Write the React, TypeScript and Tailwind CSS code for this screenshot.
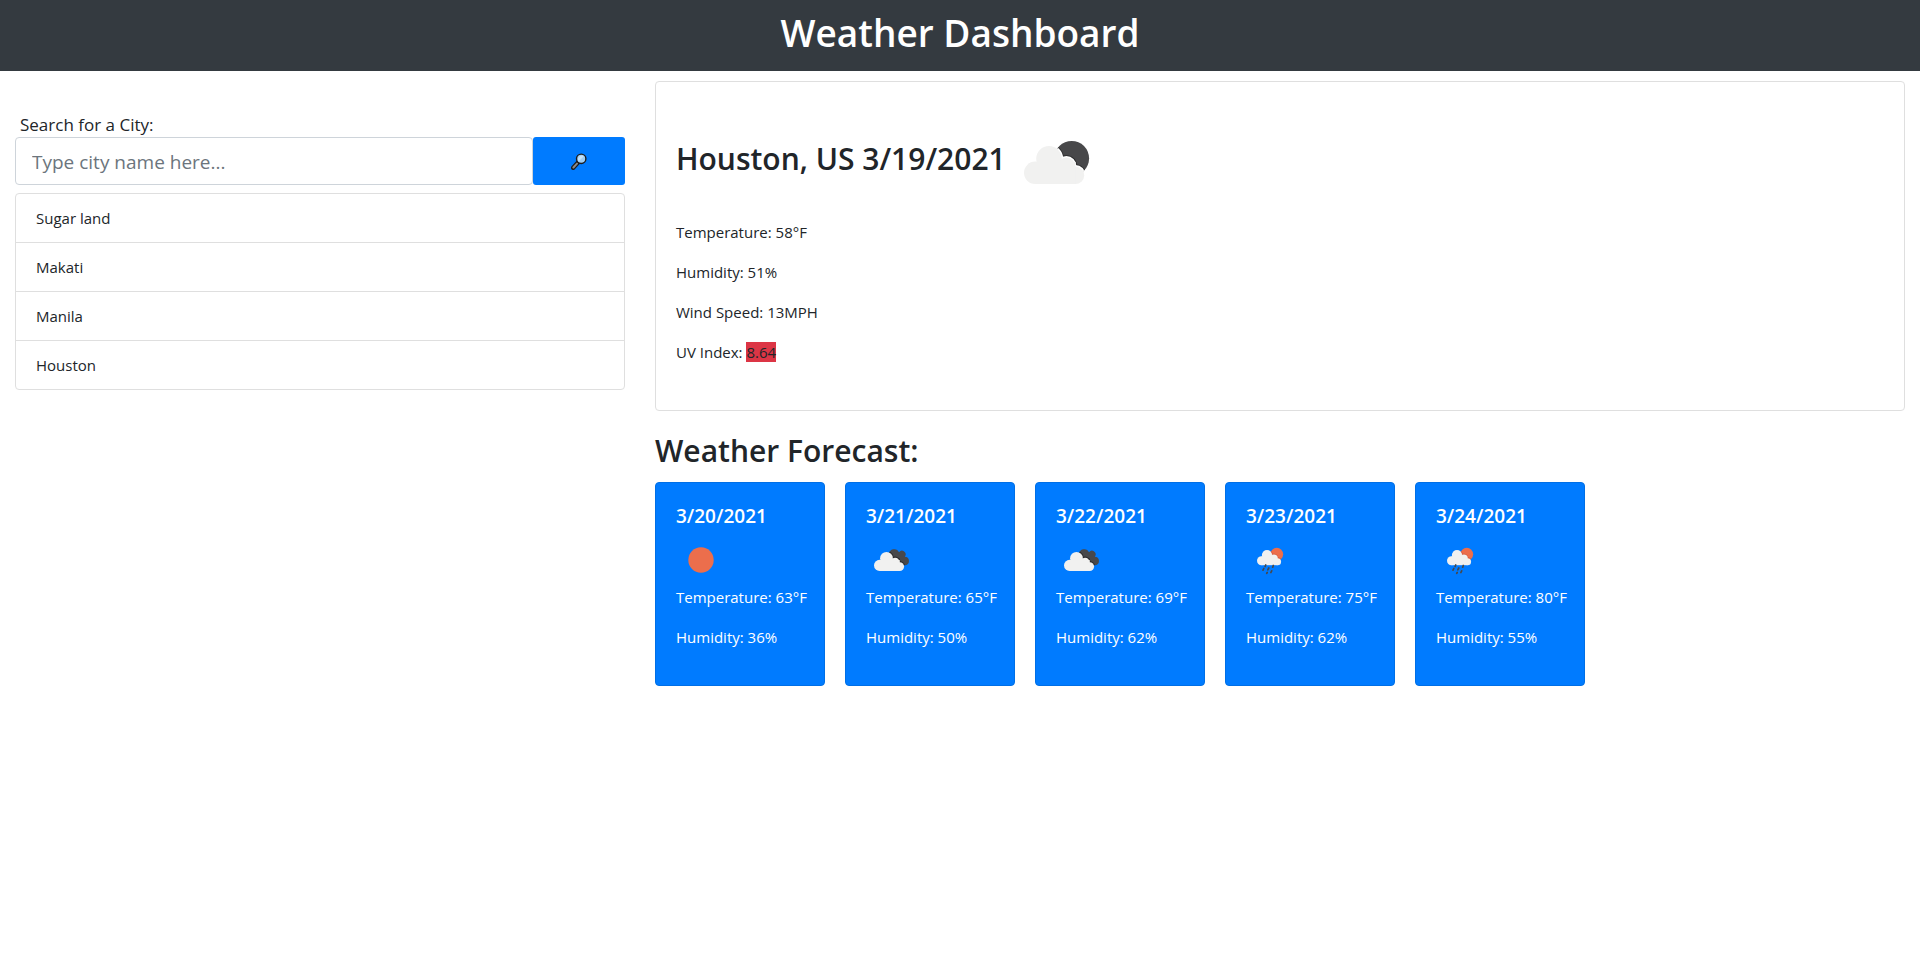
import React, { useId } from "react";

type IconKind = "sun" | "clouds" | "rain" | "night";

const history = ["Sugar land", "Makati", "Manila", "Houston"];

const forecast: { date: string; icon: IconKind; temp: number; humidity: number }[] = [
  { date: "3/20/2021", icon: "sun", temp: 63, humidity: 36 },
  { date: "3/21/2021", icon: "clouds", temp: 65, humidity: 50 },
  { date: "3/22/2021", icon: "clouds", temp: 69, humidity: 62 },
  { date: "3/23/2021", icon: "rain", temp: 75, humidity: 62 },
  { date: "3/24/2021", icon: "rain", temp: 80, humidity: 55 },
];

function CloudShape({ grow = 0, fill }: { grow?: number; fill: string }) {
  return (
    <g fill={fill}>
      <circle cx="27.2" cy="60.8" r={11.2 + grow} />
      <circle cx="41" cy="46.8" r={12.8 + grow} />
      <circle cx="58.4" cy="54" r={8.6 + grow} />
      <circle cx="67.4" cy="63.2" r={8.8 + grow} />
      <rect x="27.2" y="50" width="40.2" height="22" />
    </g>
  );
}

// The moon, sun or dark cloud that sits behind the light cloud.
function BackShape({ kind }: { kind: IconKind }) {
  if (kind === "night") return <circle cx="63.7" cy="46.3" r="17.4" />;
  if (kind === "rain") return <circle cx="61.5" cy="38.5" r="12.8" />;
  return (
    <path d="M46 38.5 A10.5 10.5 0 0 1 66 34.4 A7.4 7.4 0 0 1 77.6 43.6 A8.6 8.6 0 0 1 78.6 60.7 L60 60.7 L46 44 Z" />
  );
}

function WeatherIcon({ kind, className }: { kind: IconKind; className: string }) {
  const clip = useId();
  if (kind === "sun") {
    return (
      <svg viewBox="0 0 100 100" className={className} aria-hidden="true">
        <circle cx="50" cy="50" r="25.4" fill="#ec6e4c" />
      </svg>
    );
  }
  const rain = kind === "rain";
  const scale = rain ? "translate(9.2 2.8) scale(0.8)" : undefined;
  return (
    <svg viewBox="0 0 100 100" className={className} aria-hidden="true">
      <clipPath id={clip}>
        <BackShape kind={kind} />
      </clipPath>
      <g fill={rain ? "#ec6e4c" : "#48484a"}>
        <BackShape kind={kind} />
      </g>
      <g clipPath={`url(#${clip})`}>
        <g transform={scale}>
          <CloudShape grow={2.2} fill={rain ? "#d5583a" : "#2b2b2c"} />
          {kind === "night" && <CloudShape grow={1.4} fill="#ffffff" />}
        </g>
      </g>
      <g transform={scale}>
        <CloudShape fill="#f1f1f0" />
      </g>
      {rain && (
        <g stroke="#48484a" strokeWidth="3.4" strokeLinecap="round">
          <path d="M39.5 60 L38.2 63" />
          <path d="M54.6 61 L53.4 64.4" />
          <path d="M35.6 67 L34 70.4" />
          <path d="M45.6 66 L43.6 69.6" />
          <path d="M51.4 71.6 L49.8 75" />
          <path d="M42.5 75 L41.5 76.6" />
        </g>
      )}
    </svg>
  );
}

function Magnifier() {
  return (
    <svg viewBox="0 0 16 17" className="h-[17px] w-4" aria-hidden="true">
      <path d="M2.2 14.8 L7 9.6" stroke="#1c1c1c" strokeWidth="4.4" strokeLinecap="round" />
      <path d="M2.4 14.5 L6 10.6" stroke="#8a8a8a" strokeWidth="2" strokeLinecap="round" />
      <circle cx="10.2" cy="5.8" r="4.7" fill="#9fcdf3" stroke="#1c1c1c" strokeWidth="1.4" />
      <path d="M7.6 8.4 L12.8 3.2 A3.8 3.8 0 0 0 7.6 8.4 Z" fill="#c6e3fa" />
    </svg>
  );
}

export default function App() {
  return (
    <div className="min-h-screen bg-white font-['Segoe_UI','Open_Sans','Noto_Sans',sans-serif] text-[15px] leading-6 text-[#212529]">
      <header className="bg-[#343a40] pt-[9px] pb-[14px] text-center text-white">
        <h1 className="text-[37px] leading-[48px] font-semibold">Weather Dashboard</h1>
      </header>

      <div className="flex">
        <aside className="w-1/3 px-[15px] pt-[42px]">
          <form onSubmit={(e) => e.preventDefault()}>
            <label htmlFor="city" className="block px-[5px] text-[17px] leading-6">
              Search for a City:
            </label>
            <div className="flex">
              <input
                id="city"
                type="text"
                placeholder="Type city name here..."
                className="h-12 min-w-0 flex-1 rounded border border-[#ced4da] px-4 pt-0.5 text-[19px] placeholder:text-[#6c757d]"
              />
              <button
                type="submit"
                aria-label="Search"
                className="flex h-12 w-[92px] items-center justify-center rounded-[3px] bg-[#007bff]"
              >
                <Magnifier />
              </button>
            </div>
          </form>
          <ul className="mt-2 divide-y divide-[#dfdfdf] rounded border border-[#dfdfdf]">
            {history.map((city) => (
              <li key={city} className="px-5 py-3">
                {city}
              </li>
            ))}
          </ul>
        </aside>

        <main className="w-2/3 px-[15px] pt-[10px]">
          <section className="rounded border border-[#dfdfdf] px-5 pt-[30px] pb-[30px]">
            <div className="mb-2 flex items-center gap-0.5">
              <h2 className="pb-1.5 text-[30px] leading-9 font-semibold">Houston, US 3/19/2021</h2>
              <WeatherIcon kind="night" className="size-[100px]" />
            </div>
            <p className="mb-4">Temperature: 58°F</p>
            <p className="mb-4">Humidity: 51%</p>
            <p className="mb-4">Wind Speed: 13MPH</p>
            <p className="mb-4">
              UV Index: <span className="bg-[#dc3545]">8.64</span>
            </p>
          </section>

          <h2 className="mt-[21px] mb-3 text-[30px] leading-[38px] font-semibold">Weather Forecast:</h2>
          <div className="flex flex-wrap gap-5">
            {forecast.map((day) => (
              <article
                key={day.date}
                className="w-[170px] rounded border border-[#006fe6] bg-[#007bff] px-5 pt-[21px] pb-5 whitespace-nowrap text-white"
              >
                <h3 className="mb-[7px] text-[19px] leading-6 font-semibold">{day.date}</h3>
                <WeatherIcon kind={day.icon} className="size-[50px]" />
                <p className="mb-4">Temperature: {day.temp}°F</p>
                <p className="mb-4">Humidity: {day.humidity}%</p>
              </article>
            ))}
          </div>
        </main>
      </div>
    </div>
  );
}
